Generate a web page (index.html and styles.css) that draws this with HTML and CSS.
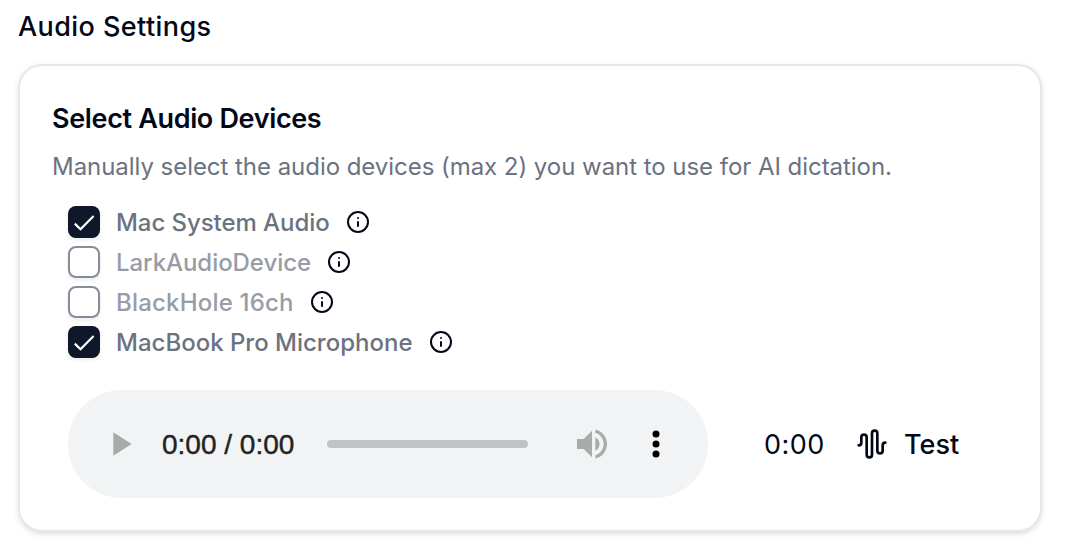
FILE: index.html
```
<!DOCTYPE html>
<html lang="en">
<head>
<meta charset="utf-8">
<title>Audio Settings</title>
<link rel="stylesheet" href="styles.css">
</head>
<body>
<svg width="0" height="0" class="defs">
  <symbol id="info" viewBox="0 0 24 24"><circle cx="12" cy="12" r="10"/><path d="M12 16v-4M12 8h.01"/></symbol>
  <symbol id="check" viewBox="0 0 32 32"><path d="M6.800 17.600L12.500 23.200L25.600 9.900"/></symbol>
</svg>
<main class="page">
  <h1 class="page-title">Audio Settings</h1>
  <section class="card">
    <h2 class="card-title">Select Audio Devices</h2>
    <p class="card-desc">Manually select the audio devices (max 2) you want to use for AI dictation.</p>
    <ul class="devices">
      <li class="device"><span class="box checked"><svg class="check"><use href="#check"/></svg></span><span class="label">Mac System Audio</span><svg class="info"><use href="#info"/></svg></li>
      <li class="device"><span class="box"></span><span class="label muted">LarkAudioDevice</span><svg class="info"><use href="#info"/></svg></li>
      <li class="device"><span class="box"></span><span class="label muted numeric">BlackHole 16ch</span><svg class="info"><use href="#info"/></svg></li>
      <li class="device"><span class="box checked"><svg class="check"><use href="#check"/></svg></span><span class="label wide">MacBook Pro Microphone</span><svg class="info"><use href="#info"/></svg></li>
    </ul>
    <div class="controls">
      <div class="player">
        <svg class="icon play" viewBox="0 0 24 24"><path d="M8 5v14l11-7z"/></svg>
        <span class="time">0:00 / 0:00</span>
        <span class="track"></span>
        <svg class="icon volume" viewBox="0 0 24 24"><path d="M3 9v6h4l5 5V4L7 9H3zm13.500 3c0-1.770-1.020-3.290-2.500-4.030v8.050c1.480-.73 2.500-2.250 2.500-4.020zM14 3.230v2.060c2.890.86 5 3.540 5 6.710s-2.110 5.850-5 6.710v2.060c4.010-.91 7-4.490 7-8.770s-2.990-7.860-7-8.770z"/></svg>
        <svg class="icon more" viewBox="0 0 24 24"><circle cx="12" cy="6" r="2.100"/><circle cx="12" cy="12" r="2.100"/><circle cx="12" cy="18" r="2.100"/></svg>
      </div>
      <span class="elapsed">0:00</span>
      <button class="test"><svg class="wave" viewBox="0 0 24 24"><path d="M2 13a2 2 0 0 0 2-2V7a2 2 0 0 1 4 0v13a2 2 0 0 0 4 0V4a2 2 0 0 1 4 0v13a2 2 0 0 0 4 0v-4a2 2 0 0 1 2-2"/></svg><span>Test</span></button>
    </div>
  </section>
</main>
</body>
</html>
```
FILE: styles.css
```
* { box-sizing: border-box; margin: 0; padding: 0; }
body { background: #fff; color: #020817; font-family: Inter, "Liberation Sans", sans-serif; white-space: nowrap; }
.defs { position: absolute; }
.page { padding: 6px 26px 12px 18px; }
.page-title { height: 40px; line-height: 42px; font-size: 27px; font-weight: 500; letter-spacing: .42px; }
.card { height: 468px; margin-top: 18px; padding: 32px; border: 2px solid #e2e8f0; border-radius: 24px; box-shadow: 0 2px 6px rgba(0,0,0,.1), 0 2px 4px -2px rgba(0,0,0,.1); }
.card-title { height: 40px; line-height: 42px; font-size: 27px; font-weight: 600; letter-spacing: -.35px; }
.card-desc { height: 40px; margin-top: 8px; line-height: 42px; font-size: 24px; letter-spacing: -.045px; color: #6b7280; }
.devices { list-style: none; padding: 16px 0 0 16px; }
.device { display: flex; align-items: center; height: 40px; }
.box { width: 32px; height: 32px; flex: none; border: 2px solid #868b98; border-radius: 8px; box-shadow: 0 2px 4px rgba(0,0,0,.08); }
.checked { background: #0f172a; border: 0; }
.check { display: block; width: 32px; height: 32px; fill: none; stroke: #fff; stroke-width: 2.2; }
.label { margin-left: 16px; font-size: 24px; font-weight: 500; letter-spacing: -.06px; color: #6b7280; }
.muted { color: #989ca6; }
.numeric { letter-spacing: .19px; }
.wide { letter-spacing: 0; }
.info { width: 24px; height: 24px; margin-left: 16px; fill: none; stroke: #020817; stroke-width: 2; stroke-linecap: round; }
.controls { display: flex; align-items: center; height: 108px; margin: 28px 0 0 16px; }
.player { display: flex; align-items: center; width: 640px; height: 108px; padding: 0 32px; border-radius: 54px; background: #f1f3f4; }
.icon { width: 40px; height: 40px; flex: none; fill: #a9abab; }
.time { width: 133px; margin-left: 22px; padding-top: 2px; font: 28px "Liberation Sans", sans-serif; color: #222; -webkit-text-stroke: .4px #222; }
.track { width: 201px; height: 8px; margin-left: 32px; border-radius: 4px; background: #c1c2c3; }
.volume { margin-left: 44px; }
.more { margin-left: 24px; fill: #000; }
.elapsed { width: 60px; margin-left: 56px; font-size: 27px; letter-spacing: .45px; }
.test { display: flex; align-items: center; margin-left: 32px; border: 0; background: none; color: inherit; font: 550 27px Inter, sans-serif; }
.wave { width: 32px; height: 32px; margin-right: 16px; fill: none; stroke: currentColor; stroke-width: 2; stroke-linecap: round; stroke-linejoin: round; }
```
